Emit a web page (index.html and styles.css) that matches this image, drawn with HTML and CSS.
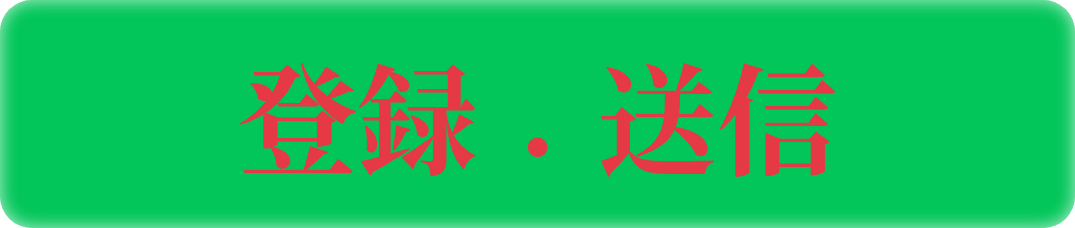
FILE: index.html
```html
<!DOCTYPE html>
<html lang="ja">
<head>
  <meta charset="UTF-8">
  <meta name="viewport" content="width=device-width, initial-scale=1.0">
  <title>登録・送信</title>
  <link rel="stylesheet" href="styles.css">
</head>
<body>
  <button class="submit-button" type="submit">登録<span class="sep">.</span>送信</button>
</body>
</html>
```

FILE: styles.css
```css
html, body {
  margin: 0;
  padding: 0;
  background: #fff;
}
body {
  display: flex;
  width: 1075px;
  height: 228px;
}
.submit-button {
  flex: 1;
  margin: 0;
  padding: 0;
  border: none;
  border-radius: 32px;
  background: #02c659;
  box-shadow: inset 0 0 18px rgba(255, 255, 255, 0.75);
  color: #e63946;
  font-family: "Noto Serif CJK JP", "Noto Serif CJK SC", serif;
  font-weight: 700;
  font-size: 120px;
  line-height: 1;
  cursor: pointer;
}
.sep {
  display: inline-block;
  width: 1em;
  line-height: 0;
  text-align: center;
  vertical-align: 0.09em;
}
```
